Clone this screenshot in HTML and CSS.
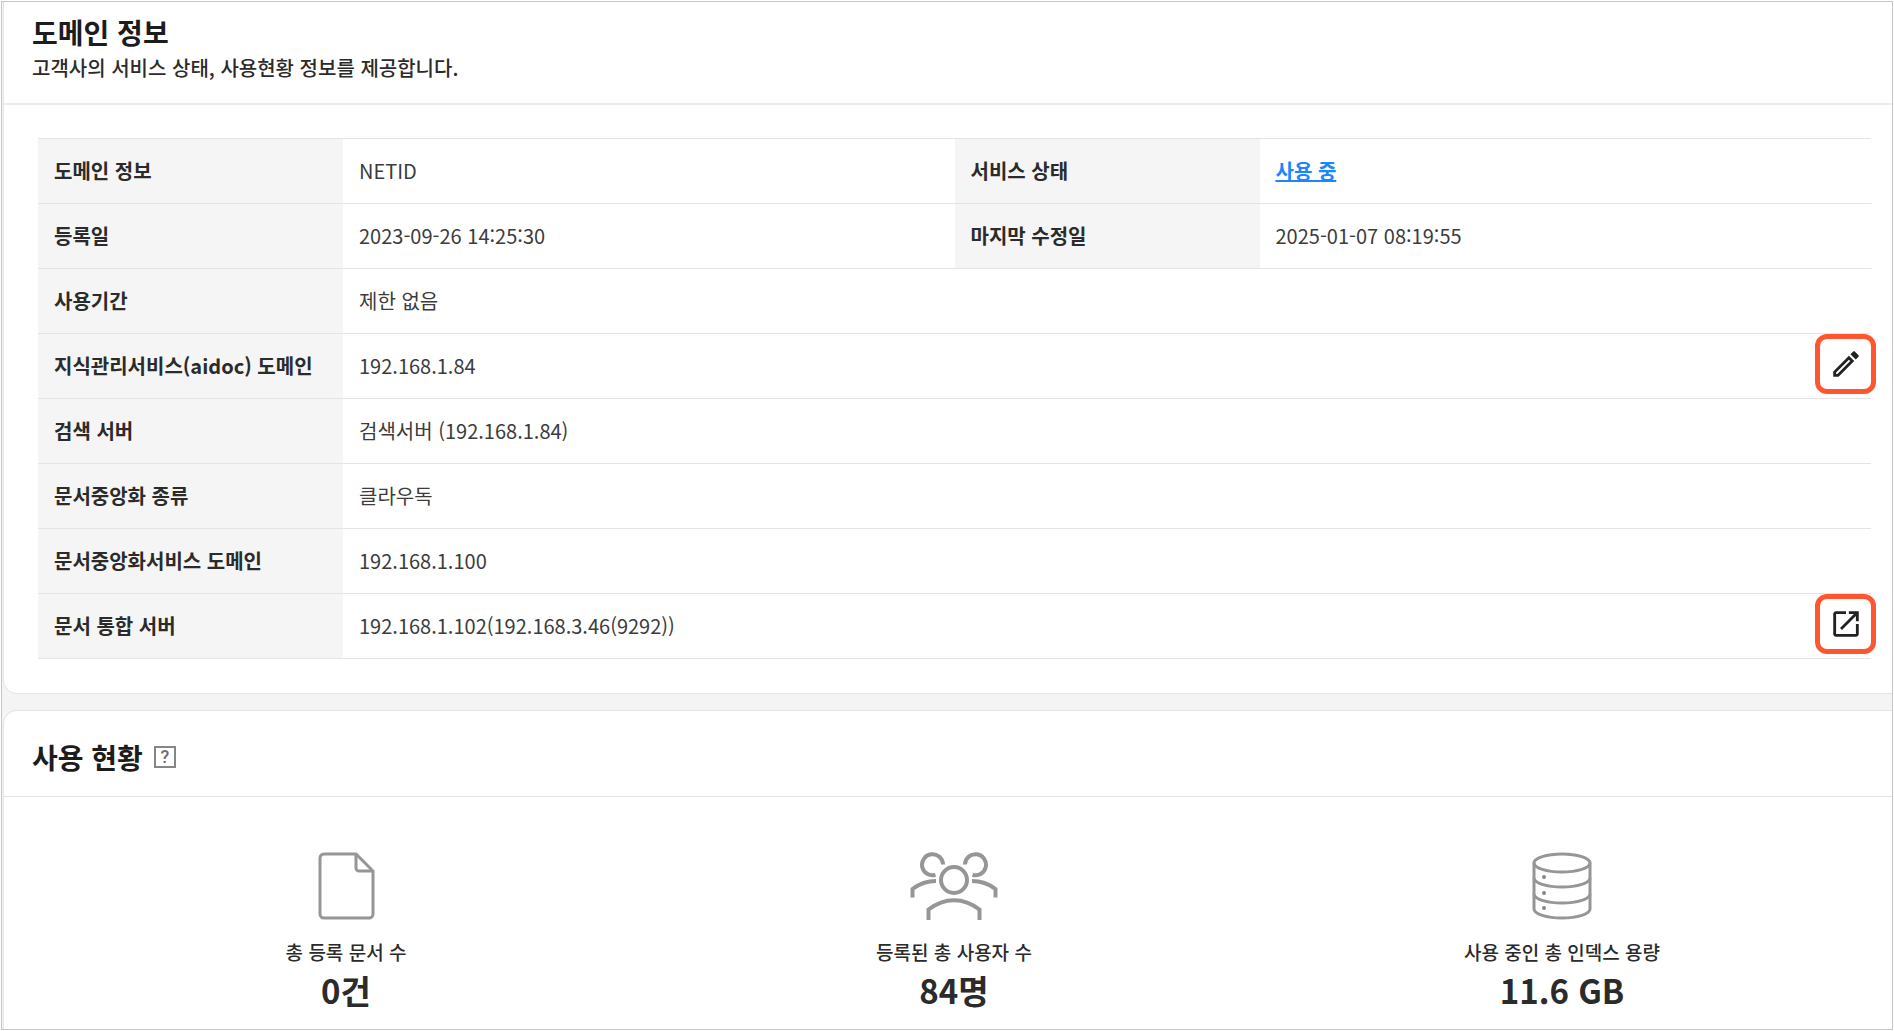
FILE: index.html
```html
<!DOCTYPE html>
<html lang="ko">
<head>
    <meta charset="UTF-8">
    <meta name="viewport" content="width=device-width, initial-scale=1.0">
    <title>도메인 정보</title>
    <link rel="stylesheet" href="styles.css">
</head>
<body>
    <main class="page">
        <section class="card card-domain">
            <header class="card-header">
                <h1>도메인 정보</h1>
                <p>고객사의 서비스 상태, 사용현황 정보를 제공합니다.</p>
            </header>
            <table class="info-table">
                <colgroup>
                    <col class="col-label">
                    <col class="col-value">
                    <col class="col-label">
                    <col class="col-value">
                </colgroup>
                <tbody>
                    <tr>
                        <th scope="row">도메인 정보</th>
                        <td>NETID</td>
                        <th scope="row">서비스 상태</th>
                        <td><a href="#" class="status-link">사용 중</a></td>
                    </tr>
                    <tr>
                        <th scope="row">등록일</th>
                        <td>2023-09-26 14:25:30</td>
                        <th scope="row">마지막 수정일</th>
                        <td>2025-01-07 08:19:55</td>
                    </tr>
                    <tr>
                        <th scope="row">사용기간</th>
                        <td colspan="3">제한 없음</td>
                    </tr>
                    <tr>
                        <th scope="row">지식관리서비스(aidoc) 도메인</th>
                        <td colspan="3">192.168.1.84
                            <button type="button" class="icon-button" aria-label="수정">
                                <svg viewBox="0 0 24 24"><path d="M14.06 9.02l.92.92L5.92 19H5v-.92l9.06-9.06M17.66 3c-.25 0-.51.1-.7.29l-1.83 1.83 3.75 3.75 1.83-1.83c.39-.39.39-1.02 0-1.41l-2.34-2.34c-.2-.2-.45-.29-.71-.29zm-3.6 3.19L3 17.25V21h3.75L17.81 9.94l-3.75-3.75z"/></svg>
                            </button>
                        </td>
                    </tr>
                    <tr>
                        <th scope="row">검색 서버</th>
                        <td colspan="3">검색서버 (192.168.1.84)</td>
                    </tr>
                    <tr>
                        <th scope="row">문서중앙화 종류</th>
                        <td colspan="3">클라우독</td>
                    </tr>
                    <tr>
                        <th scope="row">문서중앙화서비스 도메인</th>
                        <td colspan="3">192.168.1.100</td>
                    </tr>
                    <tr>
                        <th scope="row">문서 통합 서버</th>
                        <td colspan="3">192.168.1.102(192.168.3.46(9292))
                            <button type="button" class="icon-button" aria-label="새 창으로 열기">
                                <svg viewBox="0 0 24 24"><path d="M19 19H5V5h7V3H5c-1.11 0-2 .9-2 2v14c0 1.1.89 2 2 2h14c1.1 0 2-.9 2-2v-7h-2v7zM14 3v2h3.59l-9.83 9.83 1.41 1.41L19 6.41V10h2V3h-7z"/></svg>
                            </button>
                        </td>
                    </tr>
                </tbody>
            </table>
        </section>

        <section class="card card-usage">
            <header class="usage-header">
                <h2>사용 현황</h2>
                <button type="button" class="help-button">?</button>
            </header>
            <div class="stats">
                <div class="stat">
                    <svg class="stat-icon" width="92" height="68" viewBox="0 0 92 68">
                        <path d="M24 2h32l17 17v43a4 4 0 0 1-4 4H24a4 4 0 0 1-4-4V6a4 4 0 0 1 4-4z"/>
                        <path d="M56 2v14a3 3 0 0 0 3 3h14"/>
                    </svg>
                    <span class="stat-label">총 등록 문서 수</span>
                    <strong class="stat-value">0건</strong>
                </div>
                <div class="stat">
                    <svg class="stat-icon stat-icon-users" width="92" height="68" viewBox="0 0 92 68">
                        <circle cx="46" cy="28" r="13"/>
                        <path d="M35 12.500a10.500 10.500 0 1 0-7.500 10.300M57 12.500a10.500 10.500 0 1 1 7.500 10.300"/>
                        <path d="M28 29c-9 0-17 3-23.500 8v8.500M64 29c9 0 17 3 23.500 8v8.500"/>
                        <path d="M20.500 68V57.500c16-12.500 35-12.500 51 0V68"/>
                    </svg>
                    <span class="stat-label">등록된 총 사용자 수</span>
                    <strong class="stat-value">84명</strong>
                </div>
                <div class="stat">
                    <svg class="stat-icon" width="92" height="68" viewBox="0 0 92 68">
                        <ellipse cx="46" cy="11" rx="28" ry="9"/>
                        <path d="M18 11v46c0 5 12.500 9 28 9s28-4 28-9V11"/>
                        <path d="M18 26c0 5 12.500 9 28 9s28-4 28-9M18 42c0 5 12.500 9 28 9s28-4 28-9"/>
                        <g class="stat-dots">
                            <circle cx="28" cy="25" r="2"/>
                            <circle cx="28" cy="41" r="2"/>
                            <circle cx="28" cy="56" r="2"/>
                        </g>
                    </svg>
                    <span class="stat-label">사용 중인 총 인덱스 용량</span>
                    <strong class="stat-value">11.6 GB</strong>
                </div>
            </div>
        </section>
    </main>
</body>
</html>
```
FILE: styles.css
```css
*{
    box-sizing: border-box;
}
body{
    margin: 0;
    padding: 1px;
    min-height: 100vh;
    display: flex;
    background-color: white;
    color: #2b2b2b;
    font-family: "Noto Sans CJK KR", "Noto Sans", sans-serif;
    font-size: 20px;
    line-height: 28px;
}
h1, h2, p{
    margin: 0;
}
h1, h2{
    color: #1c1c1c;
    font-size: 28px;
    line-height: 36px;
    font-weight: 700;
}
.page{
    flex: 1;
    display: flex;
    flex-direction: column;
    gap: 16px;
    padding-left: 1px;
    border: 1px solid #c6c6c6;
    background-color: #f4f4f4;
}
.card{
    background-color: white;
    border: 1px solid #e4e4e4;
    border-right: none;
}
.card-domain{
    border-top: none;
    border-radius: 0 0 0 14px;
    padding-bottom: 34px;
}
.card-usage{
    flex: 1;
    border-bottom: none;
    border-radius: 14px 0 0 0;
}
.card-header{
    padding: 12px 28px 17px;
    border-bottom: 2px solid #ebebeb;
}
.card-header p{
    line-height: 36px;
    font-weight: 500;
}
.info-table{
    width: calc(100% - 55px);
    margin: 33px 21px 0 34px;
    table-layout: fixed;
    border-collapse: separate;
    border-spacing: 0;
    border-top: 1px solid #e4e4e4;
}
.col-label{
    width: 305px;
}
.info-table th, .info-table td{
    height: 65px;
    padding: 0 16px;
    border-bottom: 1px solid #e4e4e4;
    text-align: left;
}
.info-table th{
    background-color: #f5f5f5;
    font-weight: 700;
}
.info-table td{
    position: relative;
    color: #3c3c3c;
}
.status-link{
    color: #1a86ff;
    font-weight: 700;
}
.icon-button{
    position: absolute;
    top: 0;
    right: -5px;
    width: 61px;
    height: 60px;
    padding: 0;
    display: flex;
    align-items: center;
    justify-content: center;
    border: 5px solid #ff5630;
    border-radius: 12px;
    background-color: white;
}
.icon-button svg{
    width: 34px;
    height: 34px;
    fill: #222222;
}
.usage-header{
    display: flex;
    align-items: center;
    gap: 11px;
    padding: 28px 28px 21px;
    border-bottom: 1px solid #e4e4e4;
}
.help-button{
    width: 22px;
    height: 22px;
    padding: 0;
    border: 2px solid #868686;
    background-color: white;
    color: #6e6e6e;
    font-family: Roboto, sans-serif;
    font-size: 18px;
    font-weight: 500;
    line-height: 18px;
}
.stats{
    display: grid;
    grid-template-columns: repeat(3, 1fr);
    padding: 55px 26px 0 38px;
}
.stat{
    display: flex;
    flex-direction: column;
    align-items: center;
}
.stat-icon{
    fill: none;
    stroke: #969696;
    stroke-width: 3;
}
.stat-icon-users{
    stroke-width: 4;
}
.stat-dots{
    fill: #868686;
    stroke: none;
}
.stat-label{
    margin-top: 18px;
    font-size: 19px;
    font-weight: 500;
}
.stat-value{
    font-size: 33px;
    line-height: 48px;
    font-weight: 700;
}
```
